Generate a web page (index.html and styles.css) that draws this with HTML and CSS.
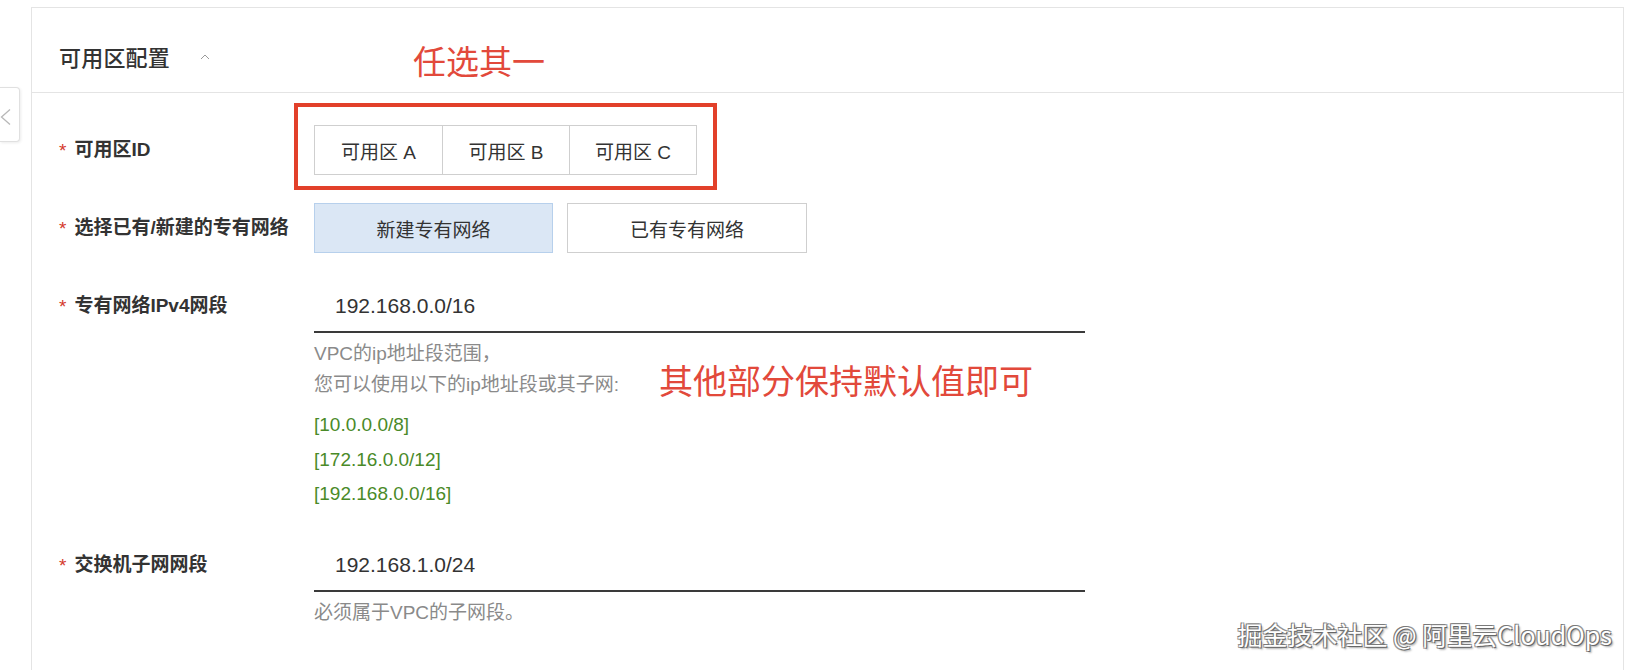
FILE: index.html
```html
<!DOCTYPE html>
<html lang="zh-CN">
<head>
<meta charset="utf-8">
<title>可用区配置</title>
<link rel="stylesheet" href="styles.css">
</head>
<body>
<div class="page">
  <div class="side-tab">
    <svg width="12" height="18" viewBox="0 0 12 18"><polyline points="10,1.5 1.5,9 10,16.5" fill="none" stroke="#b8b8b8" stroke-width="1.3"/></svg>
  </div>
  <section class="panel">
    <header class="panel-head">
      <h2 class="panel-title">可用区配置</h2>
      <svg class="chev" width="10" height="6" viewBox="0 0 10 6"><polyline points="1,5 5,1 9,5" fill="none" stroke="#9a9a9a" stroke-width="1"/></svg>
      <span class="note note-head">任选其一</span>
    </header>
    <div class="form">
      <div class="row">
        <div class="label"><span class="req">*</span>可用区ID</div>
        <div class="control">
          <div class="seg-wrap">
            <div class="seg">
              <div class="seg-item">可用区 A</div>
              <div class="seg-item">可用区 B</div>
              <div class="seg-item">可用区 C</div>
            </div>
            <div class="annot-box"></div>
          </div>
        </div>
      </div>
      <div class="row">
        <div class="label"><span class="req">*</span>选择已有/新建的专有网络</div>
        <div class="control btns">
          <div class="btn btn-active">新建专有网络</div>
          <div class="btn">已有专有网络</div>
        </div>
      </div>
      <div class="row">
        <div class="label"><span class="req">*</span>专有网络IPv4网段</div>
        <div class="control">
          <div class="input">192.168.0.0/16</div>
          <div class="help">
            <div class="help-wrap">
              <p class="help-gray">VPC的ip地址段范围，<br>您可以使用以下的ip地址段或其子网:</p>
              <span class="note note-mid">其他部分保持默认值即可</span>
            </div>
            <p class="help-green">[10.0.0.0/8]<br>[172.16.0.0/12]<br>[192.168.0.0/16]</p>
          </div>
        </div>
      </div>
      <div class="row">
        <div class="label"><span class="req">*</span>交换机子网网段</div>
        <div class="control">
          <div class="input">192.168.1.0/24</div>
          <div class="help">
            <p class="help-gray">必须属于VPC的子网段。</p>
          </div>
        </div>
      </div>
    </div>
  </section>
  <div class="watermark">掘金技术社区 @ 阿里云CloudOps</div>
</div>
</body>
</html>
```

FILE: styles.css
```css
* { box-sizing: border-box; }
html, body {
  margin: 0;
  padding: 0;
  background: #fff;
  height: 670px;
  overflow: hidden;
}
body {
  font-family: "Liberation Sans", "Noto Sans CJK SC", sans-serif;
  color: #333;
}
.page {
  position: relative;
  height: 670px;
  padding: 7px 8px 0 31px;
}
.side-tab {
  position: absolute;
  left: 0;
  top: 87px;
  width: 20px;
  height: 55px;
  background: #fff;
  border: 1px solid #e0e0e0;
  border-left: none;
  border-radius: 0 4px 4px 0;
  box-shadow: 1px 1px 3px rgba(0,0,0,0.08);
  display: flex;
  align-items: center;
  justify-content: flex-start;
  padding: 4px 0 0 0;
}
.panel {
  height: 663px;
  border: 1px solid #e4e4e4;
  border-bottom: none;
}
.panel-head {
  height: 85px;
  border-bottom: 1px solid #e4e4e4;
  display: flex;
  align-items: center;
  padding: 12px 0 0 27px;
}
.panel-title {
  margin: 0;
  font-size: 22px;
  font-weight: 500;
  color: #333;
  letter-spacing: 0.2px;
}
.chev {
  margin-left: 30px;
  margin-top: 2px;
}
.note {
  color: #e2493b;
  font-family: "Noto Sans CJK SC", sans-serif;
  font-size: 33px;
  line-height: 1;
}
.note-head {
  margin-left: 203px;
  margin-top: 8px;
}
.form {
  padding: 32px 0 0 27px;
}
.row {
  display: flex;
  align-items: flex-start;
  margin-bottom: 28px;
}
.label {
  width: 255px;
  flex: none;
  font-size: 19px;
  font-weight: 600;
  line-height: 50px;
  color: #333;
  white-space: nowrap;
}
.req {
  color: #d4382c;
  font-weight: 400;
  margin-right: 8px;
  position: relative;
  top: 1px;
}
.control {
  flex: none;
  width: 771px;
}
.seg-wrap {
  position: relative;
  display: inline-block;
}
.seg {
  display: flex;
  border: 1px solid #cfcfcf;
}
.seg-item {
  width: 127px;
  height: 48px;
  display: flex;
  align-items: center;
  justify-content: center;
  font-size: 19px;
  color: #333;
}
.seg-item + .seg-item {
  border-left: 1px solid #cfcfcf;
}
.annot-box {
  position: absolute;
  left: -20px;
  top: -22px;
  right: -20px;
  bottom: -15px;
  border: 4px solid #e2402a;
}
.btns {
  display: flex;
  gap: 14px;
}
.btn {
  width: 240px;
  height: 50px;
  border: 1px solid #cfcfcf;
  display: flex;
  align-items: center;
  justify-content: center;
  font-size: 19px;
  color: #333;
  background: #fff;
}
.btn-active {
  background: #dbe7f5;
  border-color: #b7d0ec;
  width: 239px;
}
.input {
  height: 52px;
  border-bottom: 2px solid #3a3a3a;
  padding-left: 21px;
  font-size: 21px;
  line-height: 50px;
  color: #333;
}
.help {
  margin-top: 5px;
  font-size: 19px;
}
.help p {
  margin: 0;
}
.help-wrap {
  display: flex;
  align-items: flex-end;
}
.help-gray {
  color: #8a8a8a;
  line-height: 31px;
}
.note-mid {
  font-size: 34px;
  margin-left: 40px;
  position: relative;
  top: -3px;
}
.help-green {
  color: #4a8a28;
  line-height: 34.5px;
  margin-top: 8px !important;
}
.watermark {
  position: absolute;
  right: 20px;
  top: 619px;
  font-family: "Noto Sans CJK SC", sans-serif;
  font-size: 25px;
  line-height: 30px;
  color: #fff;
  text-shadow: -1px -1px 0 #7a7a7a, 1px 1px 0 #666, 1px -1px 0 #999, -1px 1px 0 #999, 2px 2px 2px rgba(0,0,0,0.35);
}
```
